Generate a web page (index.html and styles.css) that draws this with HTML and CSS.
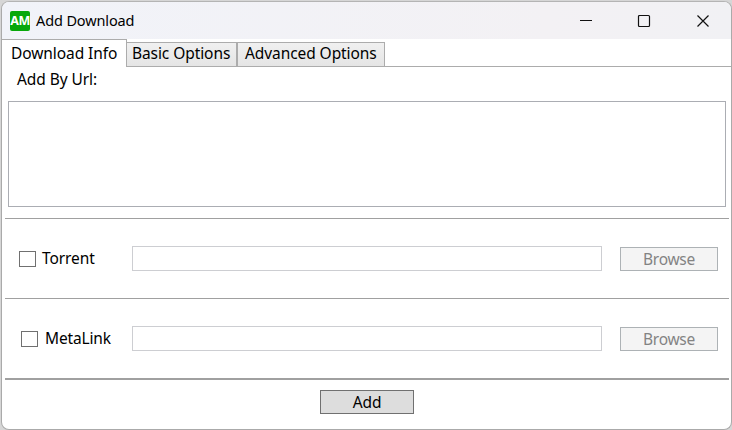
FILE: index.html
```html
<!DOCTYPE html>
<html lang="en">
<head>
<meta charset="utf-8">
<title>Add Download</title>
<link rel="stylesheet" href="styles.css">
</head>
<body>
<div class="window">
  <header class="titlebar">
    <span class="logo">AM</span>
    <h1 class="title">Add Download</h1>
    <svg class="control" viewBox="0 0 14 14"><path d="M1 6.5h12"/></svg>
    <svg class="control maximize" viewBox="0 0 14 14"><rect x="1.5" y="1.5" width="11" height="11" rx="1"/></svg>
    <svg class="control" viewBox="0 0 14 14"><path d="M1.5 1.5l11 11M12.5 1.5l-11 11"/></svg>
  </header>
  <nav class="tabs">
    <div class="tab active">Download Info</div>
    <div class="tab basic">Basic Options</div>
    <div class="tab advanced">Advanced Options</div>
  </nav>
  <main class="panel">
    <div class="url-label">Add By Url:</div>
    <div class="url-box"></div>
    <section class="source">
      <span class="check"></span>
      <span class="name">Torrent</span>
      <span class="field"></span>
      <span class="browse">Browse</span>
    </section>
    <section class="source metalink">
      <span class="check"></span>
      <span class="name">MetaLink</span>
      <span class="field"></span>
      <span class="browse">Browse</span>
    </section>
    <footer class="actions"><span class="add">Add</span></footer>
  </main>
</div>
</body>
</html>
```
FILE: styles.css
```css
* { box-sizing: border-box; }
body {
  margin: 0;
  width: 732px;
  height: 430px;
  padding: 1px 0 0 1px;
  overflow: hidden;
  background: #d6d6d6;
  font: 15.5px/22px "Noto Sans", "Open Sans", sans-serif;
  letter-spacing: -0.08px;
  color: #000;
  white-space: nowrap;
}
.window {
  height: 429px;
  border: 1px solid #aaa;
  border-top-color: #b4b4b4;
  border-radius: 8px;
  overflow: hidden;
  background: #fff;
}
.titlebar {
  height: 37px;
  display: flex;
  align-items: center;
  padding-left: 8px;
  background: linear-gradient(90deg, #f1f3f9, #f3f1f4 75%, #f1f1f4);
}
.logo {
  width: 20px;
  height: 20px;
  border-radius: 2px;
  background: #07a80b;
  color: #fff;
  font: bold 12.5px/20px "Noto Sans", sans-serif;
  letter-spacing: -0.5px;
  text-align: center;
}
.title {
  margin: -2px auto 0 6px;
  font-size: 14.5px;
  font-weight: 400;
  letter-spacing: -0.12px;
}
.control {
  width: 14px;
  height: 14px;
  margin-left: 45px;
  fill: none;
  stroke: #111;
  stroke-width: 1.2;
}
.control.maximize { margin-left: 44px; }
.control:last-child { margin-right: 21px; }
.tabs {
  height: 27px;
  display: flex;
  align-items: flex-end;
}
.tab {
  height: 24px;
  border: 1px solid #acacac;
  border-bottom: 0;
  background: linear-gradient(#f0f0f0, #e5e5e5);
  line-height: 21px;
}
.tab.active {
  position: relative;
  z-index: 1;
  width: 125px;
  height: 28px;
  margin-bottom: -1px;
  padding: 2px 0 0 9px;
  border-left: 0;
  background: #fff;
  line-height: 22px;
}
.basic { width: 110px; padding-left: 5px; border-left: 0; }
.advanced { width: 148px; padding-left: 7px; }
.panel {
  height: 363px;
  border-top: 1px solid #acacac;
}
.url-label { height: 34px; padding: 1px 0 0 15px; }
.url-box { height: 106px; margin: 0 5px 11px 6px; border: 1px solid #abadb3; }
.source {
  height: 80px;
  margin: 0 2px 0 3px;
  padding: 27px 0 0 14px;
  border-top: 1px solid #a0a0a0;
  display: flex;
  align-items: flex-start;
}
.check { width: 17px; height: 16px; margin-top: 5px; border: 1px solid #707070; }
.name { width: 90px; margin: 1px 0 0 6px; }
.field { width: 470px; height: 25px; border: 1px solid #cdced2; }
.browse {
  width: 98px;
  height: 24px;
  margin: 1px 0 0 18px;
  border: 1px solid #adb2b5;
  background: #f4f4f4;
  color: #838383;
  letter-spacing: -0.3px;
  text-align: center;
}
.metalink { padding-left: 16px; }
.metalink .name { width: 87px; margin-left: 7px; letter-spacing: -0.16px; }
.actions {
  height: 52px;
  margin: 0 2px 0 3px;
  padding-top: 10px;
  border-top: 2px solid #a0a0a0;
}
.add {
  display: block;
  width: 94px;
  height: 24px;
  margin-left: 315px;
  border: 1px solid #707070;
  background: #ddd;
  text-align: center;
}
```
